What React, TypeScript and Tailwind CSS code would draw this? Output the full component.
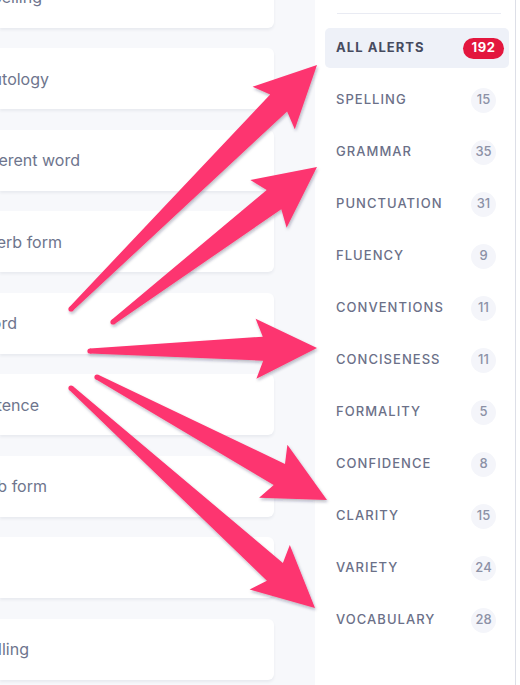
import React from 'react';

type Card = { text: string; end: string };

const cards: Card[] = [
  { text: 'Correct spelling', end: 'w-[42px]' },
  { text: 'Remove tautology', end: 'w-[49px]' },
  { text: 'Choose a different word', end: 'w-[80px]' },
  { text: 'Change the verb form', end: 'w-[62px]' },
  { text: 'Replace the word', end: 'w-[17px]' },
  { text: 'Rewrite the sentence', end: 'w-[39px]' },
  { text: 'Fix the verb form', end: 'w-[47px]' },
  { text: '', end: 'w-[10px]' },
  { text: 'Correct spelling', end: 'w-[29px]' },
];

const categories: { label: string; count: number }[] = [
  { label: 'ALL ALERTS', count: 192 },
  { label: 'SPELLING', count: 15 },
  { label: 'GRAMMAR', count: 35 },
  { label: 'PUNCTUATION', count: 31 },
  { label: 'FLUENCY', count: 9 },
  { label: 'CONVENTIONS', count: 11 },
  { label: 'CONCISENESS', count: 11 },
  { label: 'FORMALITY', count: 5 },
  { label: 'CONFIDENCE', count: 8 },
  { label: 'CLARITY', count: 15 },
  { label: 'VARIETY', count: 24 },
  { label: 'VOCABULARY', count: 28 },
];

// tail -> tip, in page pixels
const arrows: [number, number, number, number][] = [
  [71, 309, 317, 65],
  [113, 322, 317, 167],
  [90, 351, 317, 348],
  [97, 377, 327, 500],
  [71, 388, 315, 608],
];

function arrowPoints(tx: number, ty: number, px: number, py: number) {
  const len = Math.hypot(px - tx, py - ty);
  const dx = (px - tx) / len;
  const dy = (py - ty) / len;
  const nx = -dy;
  const ny = dx;
  const at = (back: number, side: number) =>
    `${(px - dx * back + nx * side).toFixed(1)},${(py - dy * back + ny * side).toFixed(1)}`;
  const tail = (side: number) => `${(tx + nx * side).toFixed(1)},${(ty + ny * side).toFixed(1)}`;
  return [tail(2.6), at(54, 12), at(61, 30), `${px},${py}`, at(61, -30), at(54, -12), tail(-2.6)].join(' ');
}

function Arrows() {
  return (
    <svg className="absolute inset-0 pointer-events-none" width="520" height="685" viewBox="0 0 520 685">
      <defs>
        <filter id="arrow-shadow" x="-20%" y="-20%" width="140%" height="140%">
          <feDropShadow dx="1" dy="2" stdDeviation="1.6" floodColor="#1d2340" floodOpacity="0.3" />
        </filter>
      </defs>
      <g fill="#fd3570" filter="url(#arrow-shadow)">
        {arrows.map(([tx, ty, px, py], i) => (
          <g key={i}>
            <polygon points={arrowPoints(tx, ty, px, py)} />
            <circle cx={tx} cy={ty} r="2.6" />
          </g>
        ))}
      </g>
    </svg>
  );
}

export default function App() {
  return (
    <div className="relative w-[520px] h-[685px] overflow-hidden flex bg-[#f7f8fb] font-['Inter','Liberation_Sans',sans-serif]">

      {/* Alert cards, cut off on the left */}
      <div className="w-[315px] flex-none overflow-hidden">
        <div className="flex flex-col gap-[20.5px] -mt-[33.5px]">
          {cards.map((card, i) => (
            <div
              key={i}
              className="w-[274px] h-[61px] flex-none flex items-center bg-white rounded-r-[6px] shadow-[0_2px_3px_rgba(40,50,90,0.07)]"
            >
              <div className={`${card.end} flex justify-end overflow-hidden`}>
                <span className="whitespace-nowrap flex-none text-[16px] text-[#6e758d]">{card.text}</span>
              </div>
            </div>
          ))}
        </div>
      </div>

      {/* Category sidebar */}
      <div className="w-[205px] flex-none flex bg-white">
        <div className="w-[201px] flex-none border-r border-[#dddfe7] pl-[10px] pr-[6px]">
          <div className="mt-[13px] ml-[12px] mr-[8px] h-px bg-[#e9ebf3]" />
          <div className="mt-[14px] flex flex-col gap-[12px]">
            {categories.map((cat, i) => {
              const active = i === 0;
              return (
                <div
                  key={cat.label}
                  className={
                    active
                      ? 'h-[40px] flex items-center pl-[11px] pr-[5px] rounded-[5px] bg-[#eef1f8]'
                      : 'h-[40px] flex items-center pl-[11px] pr-[5px] rounded-[5px]'
                  }
                >
                  <span
                    className={
                      active
                        ? 'flex-1 text-[13px] tracking-[0.08em] font-bold text-[#464b5f]'
                        : 'flex-1 text-[13px] tracking-[0.08em] font-medium text-[#6b7088]'
                    }
                  >
                    {cat.label}
                  </span>
                  <div className="w-[41px] flex justify-center">
                    {active ? (
                      <span className="h-[21px] w-[41px] rounded-full bg-[#e3173e] text-white text-[13px] font-bold tracking-[0.04em] flex items-center justify-center">
                        {cat.count}
                      </span>
                    ) : (
                      <span className="h-[25px] w-[25px] rounded-full bg-[#f4f5fa] text-[#8c91a6] text-[13px] font-medium flex items-center justify-center">
                        {cat.count}
                      </span>
                    )}
                  </div>
                </div>
              );
            })}
          </div>
        </div>
      </div>

      <Arrows />
    </div>
  );
}
